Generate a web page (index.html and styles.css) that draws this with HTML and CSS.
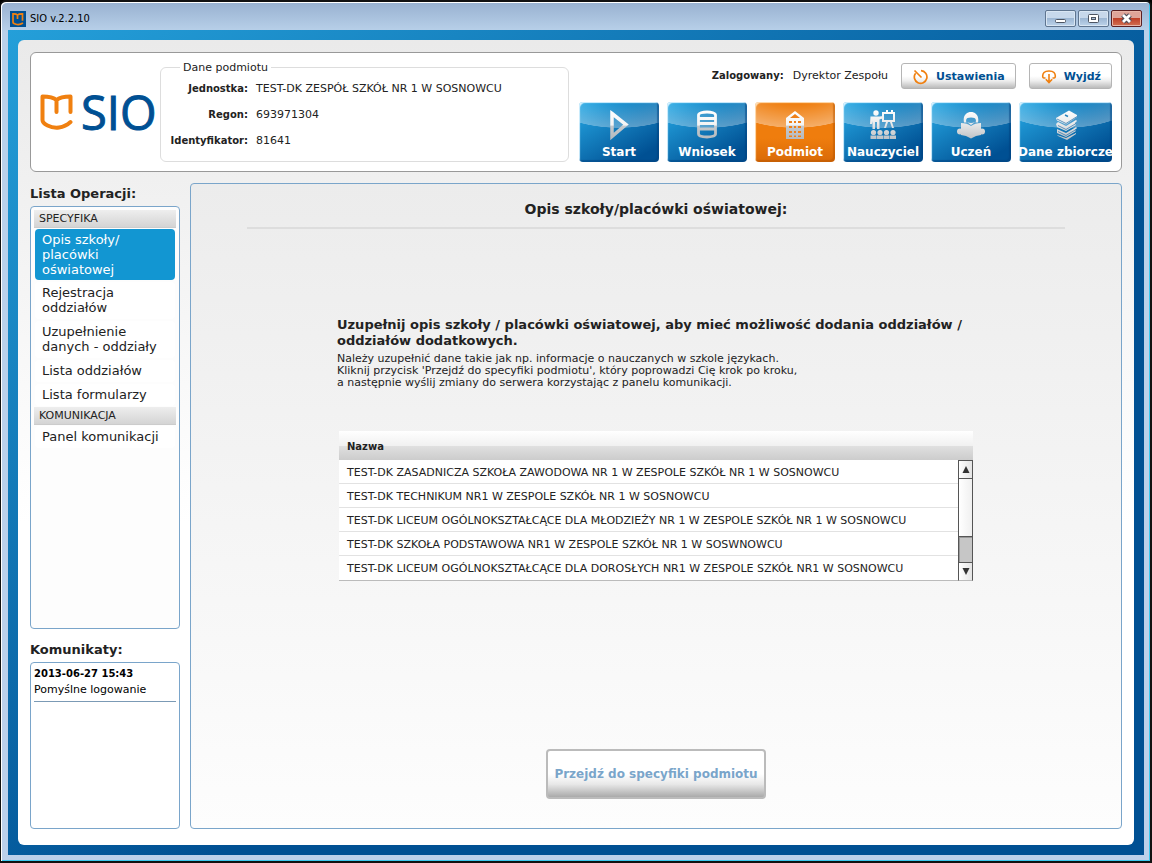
FILE: index.html
```html
<!DOCTYPE html>
<html lang="pl">
<head>
<meta charset="utf-8">
<title>SIO v.2.2.10</title>
<link rel="stylesheet" href="styles.css">
</head>
<body>
<svg class="defs" aria-hidden="true">
  <defs>
    <linearGradient id="fade" gradientUnits="userSpaceOnUse" x1="0" y1="0" x2="0" y2="32">
      <stop offset="0" stop-color="#fff"/><stop offset=".5" stop-color="#f4f4f4"/>
      <stop offset=".54" stop-color="#c4c8cc"/><stop offset="1" stop-color="#b4b8bc"/>
    </linearGradient>
    <linearGradient id="soft" gradientUnits="userSpaceOnUse" x1="0" y1="0" x2="0" y2="32">
      <stop offset="0" stop-color="#fff"/><stop offset=".4" stop-color="#eee"/><stop offset="1" stop-color="#b8bcc0"/>
    </linearGradient>
    <symbol id="mark" viewBox="0 0 34 36">
      <path d="M16.500 18V6M2.500 2.500c5 0 10 0 14 3.500 4-3.500 9-3.500 14-3.500V18M2.500 2.500V26c0 2 2 4 5 5.500 7 3.500 16 3 23-3.500" fill="none" stroke="#f08010" stroke-width="4" stroke-linecap="round" stroke-linejoin="round"/>
    </symbol>
  </defs>
</svg>
<div class="window">
  <div class="titlebar">
    <svg class="app-icon" viewBox="0 0 16 16"><rect width="16" height="16" fill="#005093"/><path d="M7.500 8V4C6 2.500 4.500 2.800 3 2.800v8.500c0 1 1 1.500 3 2 3 .7 5 0 7-1.300M7.500 4c1.500-1.400 3.500-1.200 5-1.200v7" fill="none" stroke="#f08010" stroke-width="1.700"/></svg>
    <span class="app-title">SIO v.2.2.10</span>
    <div class="controls">
      <button class="ctl" aria-label="Minimalizuj"><svg viewBox="0 0 29 15"><rect x="9.500" y="8.500" width="10" height="3" rx="1" fill="#fff" stroke="#4d5563"/></svg></button>
      <button class="ctl" aria-label="Maksymalizuj"><svg viewBox="0 0 29 15"><rect x="9.500" y="3.500" width="10" height="8" rx="1" fill="#fff" stroke="#4d5563"/><rect x="12.500" y="6.500" width="4" height="2" fill="#a8bdd5" stroke="#4d5563"/></svg></button>
      <button class="ctl ctl-close" aria-label="Zamknij"><svg viewBox="0 0 29 15"><path d="M11 4l7 7m0-7l-7 7" stroke="#4d4c58" stroke-width="5"/><path d="M11 4l7 7m0-7l-7 7" stroke="#fff" stroke-width="2.800"/></svg></button>
    </div>
  </div>
  <div class="app">
    <div class="sheet">
      <header class="header">
        <div class="logo"><svg class="logo-mark"><use href="#mark"/></svg><span>SIO</span></div>
        <fieldset class="entity">
          <legend>Dane podmiotu</legend>
          <dl>
            <dt>Jednostka:</dt><dd>TEST-DK ZESPÓŁ SZKÓŁ NR 1 W SOSNOWCU</dd>
            <dt>Regon:</dt><dd>693971304</dd>
            <dt>Identyfikator:</dt><dd>81641</dd>
          </dl>
        </fieldset>
        <div class="tools">
          <div class="session">
            <span class="user"><b>Zalogowany:</b><span>Dyrektor Zespołu</span></span>
            <button class="small-btn settings"><svg viewBox="0 0 16 16"><path d="M2.600 4.200A6.300 6.300 0 1 0 8 1.700M1.500 1.500l7 7" fill="none" stroke="#f08010" stroke-width="1.700"/></svg>Ustawienia</button>
            <button class="small-btn exit"><svg viewBox="0 0 16 16"><path d="M4.500 9H3C1 9 1.500 5 3 3.500 5 1.500 11 1.500 13 3.500 14.500 5 15 9 13 9h-1.500M8 5v8M4.800 10.200L8 13.500l3.200-3.300" fill="none" stroke="#f08010" stroke-width="1.600"/></svg>Wyjdź</button>
          </div>
          <nav class="nav">
            <button class="tile"><svg viewBox="0 0 32 32"><path d="M9 4.500l14 11-14 12z" fill="none" stroke="url(#fade)" stroke-width="3.500"/></svg><span>Start</span></button>
            <button class="tile"><svg viewBox="0 0 32 32"><path d="M7.500 6v19c0 4 17 4 17 0V6c0-4-17-4-17 0zM8 9.500h16M8 14.500h16M8 20h16" fill="none" stroke="url(#fade)" stroke-width="2.800"/></svg><span>Wniosek</span></button>
            <button class="tile active"><svg viewBox="0 0 32 32"><path d="M7 30V9l9-7 9 7v21z" fill="url(#fade)"/><path d="M11 9l5-4 5 4zM10 12h3v2h-3zm5 0h2v2h-2zm4 0h3v2h-3zM10 17h3v2h-3zm5 0h2v2h-2zm4 0h3v2h-3zM10 22h3v2h-3zm5 0h2v2h-2zm4 0h3v2h-3zM10 26.500h3v1.500h-3zm5 0h2v1.500h-2zm4 0h3v1.500h-3z" fill="#ef8018"/></svg><span>Podmiot</span></button>
            <button class="tile"><svg viewBox="0 0 32 32"><g fill="url(#soft)"><circle cx="9" cy="4" r="2.700"/><path d="M3.500 7.500h9l4-.5.700 2-4.700 1.500V20H10v-7H8v7H5.500v-8L5 15H3z"/><path fill-rule="evenodd" d="M15 3h4V1h2v2h3V1h2v2h2v10h-3l2 6h-2l-2-6h-2l-2 6h-2l2-6h-4v-2zm2 2v6h9V5z"/><circle cx="6.500" cy="23.500" r="2.600"/><circle cx="13" cy="23.500" r="2.600"/><circle cx="19.500" cy="23.500" r="2.600"/><circle cx="26" cy="23.500" r="2.600"/><path d="M3.500 30v-3.500h6V30zm6.500 0v-3.500h6V30zm6.500 0v-3.500h6V30zm6.500 0v-3.500h6V30z"/></g></svg><span>Nauczyciel</span></button>
            <button class="tile"><svg viewBox="0 0 32 32"><g fill="url(#soft)"><path d="M9 13.500C6-.5 26-.5 23 13.500h-2.500c1.500-4-1-5-4.500-5s-6 1-4.500 5z"/><path d="M12 13q4 2 8 0l-4 3z"/><path d="M6 14q6 0 10 3 4-3 10-3v12q-5 0-10 3.500Q11 26 6 26z"/><circle cx="5" cy="22.500" r="3"/><circle cx="27" cy="22.500" r="3"/></g></svg><span>Uczeń</span></button>
            <button class="tile wide"><svg viewBox="0 0 32 32"><g fill="url(#soft)"><path d="M6 9L19 1.500l8 4.500v2l-11 7.500-9-4z"/><path d="M6 15l2-2 8 4 10-6 1 1-2 2 1 2-10 6-9-4z"/><path d="M7 20l9 4 10-6 1 1-2 2 1 1-10 6-9-4z"/><path d="M7 26l9 3 10-5v1l-9 6-9-4z"/></g><path d="M15 6l3 1.500" stroke="#2d84bb" stroke-width="1.500"/><path d="M7 10l9 4.500L27 7.500M8 16.500l8 4 10-6M8 22.500l8 4 10-6" fill="none" stroke="#206fac" stroke-width=".7"/></svg><span>Dane zbiorcze</span></button>
          </nav>
        </div>
      </header>
      <div class="body">
        <aside class="side">
          <h2>Lista Operacji:</h2>
          <div class="box operations">
            <h3>SPECYFIKA</h3>
            <ul>
              <li><a class="selected" href="#">Opis szkoły/<br>placówki oświatowej</a></li>
              <li><a href="#">Rejestracja oddziałów</a></li>
              <li><a href="#">Uzupełnienie danych - oddziały</a></li>
              <li><a href="#">Lista oddziałów</a></li>
              <li><a href="#">Lista formularzy</a></li>
            </ul>
            <h3>KOMUNIKACJA</h3>
            <ul><li><a href="#">Panel komunikacji</a></li></ul>
          </div>
          <h2>Komunikaty:</h2>
          <div class="box messages">
            <div class="message"><b>2013-06-27 15:43</b><p>Pomyślne logowanie</p></div>
          </div>
        </aside>
        <main class="main">
          <h1>Opis szkoły/placówki oświatowej:</h1>
          <div class="content">
            <h2>Uzupełnij opis szkoły / placówki oświatowej, aby mieć możliwość dodania oddziałów / oddziałów dodatkowych.</h2>
            <p>Należy uzupełnić dane takie jak np. informacje o nauczanych w szkole językach.<br>Kliknij przycisk 'Przejdź do specyfiki podmiotu', który poprowadzi Cię krok po kroku,<br>a następnie wyślij zmiany do serwera korzystając z panelu komunikacji.</p>
            <div class="grid">
              <table>
                <thead><tr><th>Nazwa</th></tr></thead>
                <tbody>
                  <tr><td>TEST-DK ZASADNICZA SZKOŁA ZAWODOWA NR 1 W ZESPOLE SZKÓŁ NR 1 W SOSNOWCU</td></tr>
                  <tr><td>TEST-DK TECHNIKUM NR1 W ZESPOLE SZKÓŁ NR 1 W SOSNOWCU</td></tr>
                  <tr><td>TEST-DK LICEUM OGÓLNOKSZTAŁCĄCE DLA MŁODZIEŻY NR 1 W ZESPOLE SZKÓŁ NR 1 W SOSNOWCU</td></tr>
                  <tr><td>TEST-DK SZKOŁA PODSTAWOWA NR1 W ZESPOLE SZKÓŁ NR 1 W SOSWNOWCU</td></tr>
                  <tr><td>TEST-DK LICEUM OGÓLNOKSZTAŁCĄCE DLA DOROSŁYCH NR1 W ZESPOLE SZKÓŁ NR1 W SOSNOWCU</td></tr>
                </tbody>
              </table>
              <div class="scroll">
                <button aria-label="W górę"><svg viewBox="0 0 8 8"><path d="M4 0l4 8H0z"/></svg></button>
                <div class="track"><div class="thumb"></div></div>
                <button aria-label="W dół"><svg viewBox="0 0 8 8"><path d="M4 8l4-8H0z"/></svg></button>
              </div>
            </div>
          </div>
          <button class="go">Przejdź do specyfiki podmiotu</button>
        </main>
      </div>
    </div>
  </div>
</div>
</body>
</html>
```
FILE: styles.css
```css
* { box-sizing: border-box; margin: 0; padding: 0; }
body { background: #000; color: #222; font: 11px/12px Verdana, "DejaVu Sans", sans-serif; }
button { font: inherit; border: 0; }
.defs { position: absolute; width: 0; height: 0; }
.window {
  min-height: 100vh;
  display: flex;
  flex-direction: column;
  padding: 0 6px 6px;
  border: solid #111;
  border-width: 2px 2px 2px 1px;
  border-radius: 6px 6px 0 0;
  background: linear-gradient(#98b1d0, #b9d1ea 30px, #b9d1ea 120px, #bcd0ea);
  box-shadow: inset 1px 1px #fff, inset -1px -1px #3cc8ee;
}
.titlebar { height: 28px; display: flex; align-items: center; gap: 4px; padding: 5px 2px 0 3px; }
.app-icon { width: 16px; height: 16px; }
.app-title { font: 11px/14px Tahoma, "DejaVu Sans Condensed", sans-serif; color: #000; padding-top: 1px; }
.controls { display: flex; gap: 2px; margin-left: auto; }
.ctl {
  width: 31px; height: 17px;
  border: 1px solid #5f7590; border-radius: 2px;
  background: linear-gradient(#c7d8eb 45%, #9db7d4 50%, #bdd3ea);
  box-shadow: inset 0 0 0 1px #d9e6f3;
}
.ctl svg { display: block; width: 100%; height: 100%; }
.ctl-close { border-color: #5b1f22; background: linear-gradient(#dfa499 45%, #bf4028 50%, #d27052); box-shadow: inset 0 0 0 1px #e8b5a8; }
.app { flex: 1; display: flex; margin-left: 1px; padding: 10px; background: linear-gradient(145deg, #249fd9, #005093 60%); }
.sheet {
  flex: 1; min-width: 0;
  display: flex; flex-direction: column; gap: 11px;
  padding: 12px 12px 16px;
  border-radius: 6px;
  background: linear-gradient(#eaeaea, #fff 60%);
}
.header {
  display: flex; align-items: flex-start;
  min-height: 120px; padding: 10px 9px 9px 9px;
  border: 1px solid #999; border-radius: 6px; background: #fff;
}
.logo { display: flex; align-items: center; align-self: center; gap: 7px; width: 120px; flex: none; color: #005093; font: 47px/48px "Open Sans", sans-serif; -webkit-text-stroke: 1px #005093; padding-bottom: 2px; }
.logo-mark { width: 34px; height: 36px; flex: none; }
.entity { flex: 1; max-width: 409px; min-height: 102px; border: 1px solid #ddd; border-radius: 6px; padding: 0 5px; margin-top: -3px; }
.entity legend { margin-left: 14px; padding: 1px 3px 0; font-size: 11px; line-height: 14px; }
.entity dl { display: grid; grid-template-columns: 82px 1fr; column-gap: 8px; row-gap: 14px; padding-top: 8px; }
.entity dt { text-align: right; font-size: 10px; font-weight: bold; white-space: nowrap; }
.tools { display: flex; flex-direction: column; gap: 13px; margin-left: auto; }
.session { display: flex; justify-content: flex-end; align-items: center; gap: 13px; }
.user { display: flex; gap: 9px; }
.user b { font-size: 10px; }
.small-btn {
  display: flex; align-items: center; gap: 7px; height: 26px; padding: 1px 10px 0 11px;
  border: 1px solid #b5b5b5; border-radius: 3px;
  background: linear-gradient(#fff 50%, #eee 70%, #bbb);
  color: #005093; font-size: 11px; font-weight: bold;
}
.small-btn svg { width: 16px; height: 16px; }
.nav { display: flex; gap: 8px; }
.tile {
  width: 80px; height: 60px; overflow: hidden;
  display: flex; flex-direction: column; align-items: center; justify-content: space-between;
  padding: 7px 0 3px; border-radius: 4px; color: #fff;
  font-size: 12px; line-height: 14px; font-weight: bold; white-space: nowrap;
  background: radial-gradient(ellipse 90px 50px at 50% -24px, #fff0 50%, #ffffff50 99%, #fff0 100%), linear-gradient(150deg, #27aae6, #005093 85%);
  box-shadow: inset 2px 2px 1px -1px #d8f2ff, inset -2px -2px 1px #003f7d80;
}
.tile svg { width: 32px; height: 32px; }
.tile.active {
  background: radial-gradient(ellipse 90px 50px at 50% -24px, #fff0 50%, #ffffff60 99%, #fff0 100%), linear-gradient(#ef7d0d 60%, #d96a08);
  box-shadow: inset 2px 2px 1px -1px #ffe0b8, inset -2px -2px 1px #b5560080;
}
.tile.wide { width: 93px; }
.body { flex: 1; display: flex; gap: 10px; }
.side { width: 150px; flex: none; display: flex; flex-direction: column; }
.side h2 { font-size: 13px; line-height: 18px; padding-top: 2px; margin-bottom: 3px; white-space: nowrap; }
.box { border: 1px solid #7aa5ca; border-radius: 4px; background: #fff; padding: 3px; }
.operations { flex: 1; margin-bottom: 10px; background: #fdfdfd; }
.operations h3 { font-size: 11px; line-height: 16px; font-weight: normal; height: 18px; padding: 1px 5px 0; border-bottom: 1px solid #ccc; background: linear-gradient(#eee, #d4d4d4); }
.operations ul { list-style: none; padding: 1px; }
.operations a { display: block; padding: 3px 6px 4px 7px; margin-bottom: 2px; border-radius: 4px; background: #fff; color: #222; text-decoration: none; font-size: 13px; line-height: 15px; }
.operations li:last-child a { margin-bottom: 0; }
.operations a.selected { background: #1296d2; color: #fff; padding: 3px 6px 3px 7px; }
.messages { height: 167px; color: #000; }
.message { line-height: 16px; padding-bottom: 3px; border-bottom: 1px solid #7b9ab5; }
.message b { font-size: 10px; }
.main {
  flex: 1; min-width: 0; display: flex; flex-direction: column; align-items: center;
  padding: 16px 56px 29px; border: 1px solid #7aa5ca; border-radius: 4px;
  background: linear-gradient(#ececec, #fdfdfd);
}
.main h1 { width: 100%; max-width: 818px; padding-bottom: 9px; border-bottom: 2px solid #ddd; text-align: center; font-size: 14px; line-height: 18px; }
.content { flex: 1; width: 100%; max-width: 638px; padding-top: 88px; }
.content h2 { font-size: 13px; line-height: 16px; margin-bottom: 4px; }
.grid { display: grid; grid-template-columns: 1fr; margin: 42px 2px 0; }
.grid table, .scroll { grid-area: 1 / 1; }
.grid table { border-collapse: separate; border-spacing: 0; background: #fff; text-align: left; border-bottom: 1px solid #bbb; }
.grid th { height: 29px; padding: 2px 8px 0; font-size: 10px; background: linear-gradient(#fff, #f1f1f1 50%, #e0e0e0 52%, #ccc); }
.grid td { height: 24px; padding: 2px 8px 0; border-bottom: 1px solid #e2e2e2; white-space: nowrap; }
.grid tr:last-child td { border-bottom: 0; }
.scroll { justify-self: end; width: 15px; margin-top: 29px; display: flex; flex-direction: column; border: 1px solid #555; border-bottom-color: #bbb; background: #fff; }
.scroll button { height: 17px; display: flex; align-items: center; justify-content: center; background: linear-gradient(90deg, #fff, #e4e4e4); }
.scroll svg { width: 8px; height: 7px; fill: #333; }
.track { flex: 1; display: flex; flex-direction: column; justify-content: flex-end; border: solid #555; border-width: 1px 0; background: linear-gradient(90deg, #fff, #f0f0f0); }
.thumb { height: 26px; border-top: 1px solid #555; background: #c6c6c6; box-shadow: inset 1px 1px #999; }
.go {
  min-width: 220px; height: 50px; padding: 0 6px; border: 2px solid #bbb; border-radius: 4px;
  background: linear-gradient(#fff 50%, #e8e8e8 72%, #aaa); color: #7aa5ca; font-size: 12px; font-weight: bold;
}
```
